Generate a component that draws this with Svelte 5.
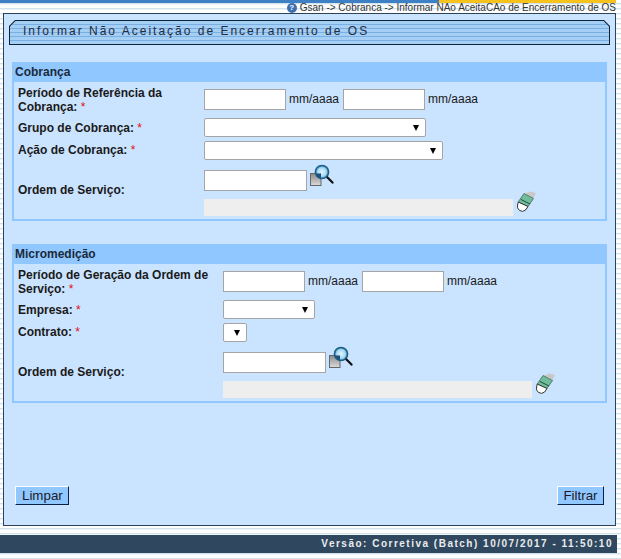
<script>
  const months = 'mm/aaaa';
</script>

{#snippet lupa()}
  <svg class="lupa" width="24" height="22" viewBox="0 0 24 22" aria-hidden="true">
    <defs>
      <linearGradient id="doc" x1="0" y1="0" x2="0" y2="1"><stop offset="0" stop-color="#8a8a8a"/><stop offset="1" stop-color="#dadada"/></linearGradient>
      <radialGradient id="lens"><stop offset="0" stop-color="#e4f5ff"/><stop offset="0.65" stop-color="#a9d9f2"/><stop offset="1" stop-color="#2e86b4"/></radialGradient>
    </defs>
    <rect x="0.5" y="9.5" width="10.5" height="12" fill="url(#doc)" stroke="#666"/>
    <circle cx="12" cy="8" r="6.6" fill="url(#lens)" stroke="#1f5f85" stroke-width="1.5"/>
    <path d="M5.8 9.5 L11 9.5 L11 14.4 Q7.4 13.6 5.8 9.5 Z" fill="#1d4f78"/>
    <path d="M17.5 13.5 L22.5 18.6" stroke="#111" stroke-width="2.2" stroke-linecap="round"/>
  </svg>
{/snippet}

{#snippet borracha()}
  <svg class="borracha" width="20" height="22" viewBox="0 0 20 22" aria-hidden="true">
    <path d="M7 3 L13 0.5 L19 2 L16 8 Z" fill="#c8c8c8"/>
    <path d="M7 2.5 L16.5 7.5 L11 15.5 L1.2 11 Z" fill="#6fbd9a" stroke="#4a6a5c" stroke-width="0.8"/>
    <path d="M3.8 8.4 L13 13" stroke="#1f4f3a" stroke-width="1"/>
    <path d="M1.2 11 L11 15.5 L8.6 19 Q5.6 21.6 2.4 19.4 Q-0.4 17 0.6 14 Z" fill="#fff" stroke="#333"/>
  </svg>
{/snippet}

<div class="page">
  <div class="topbar"><div class="blue"></div><div class="orange"></div></div>
  <div class="crumb">
    <span class="help">?</span>
    <span>Gsan -&gt; Cobranca -&gt; Informar NAo AceitaCAo de Encerramento de OS</span>
  </div>

  <main class="panel">
    <div class="title-border"><h1 class="title">Informar Não Aceitação de Encerramento de OS</h1></div>

    <section class="box first">
      <h2>Cobrança</h2>
      <div class="row two">
        <div class="lbl wide">Período de Referência da Cobrança: <em>*</em></div>
        <input class="date" type="text" /><span class="unit">{months}</span>
        <input class="date" type="text" /><span class="unit">{months}</span>
      </div>
      <div class="row r1">
        <div class="lbl wide">Grupo de Cobrança: <em>*</em></div>
        <div class="sel w222"><select></select></div>
      </div>
      <div class="row r2">
        <div class="lbl wide">Ação de Cobrança: <em>*</em></div>
        <div class="sel w239"><select></select></div>
      </div>
      <div class="row os">
        <div class="lbl wide">Ordem de Serviço:</div>
        <div class="osfields">
          <div class="line"><input class="code" type="text" />{@render lupa()}</div>
          <div class="line desc"><input class="dis" type="text" disabled />{@render borracha()}</div>
        </div>
      </div>
    </section>

    <section class="box second">
      <h2>Micromedição</h2>
      <div class="row two">
        <div class="lbl narrow">Período de Geração da Ordem de Serviço: <em>*</em></div>
        <input class="date" type="text" /><span class="unit">{months}</span>
        <input class="date" type="text" /><span class="unit">{months}</span>
      </div>
      <div class="row r1">
        <div class="lbl narrow">Empresa: <em>*</em></div>
        <div class="sel w92"><select></select></div>
      </div>
      <div class="row r2">
        <div class="lbl narrow">Contrato: <em>*</em></div>
        <div class="sel w24"><select></select></div>
      </div>
      <div class="row os">
        <div class="lbl narrow">Ordem de Serviço:</div>
        <div class="osfields">
          <div class="line"><input class="code" type="text" />{@render lupa()}</div>
          <div class="line desc"><input class="dis" type="text" disabled />{@render borracha()}</div>
        </div>
      </div>
    </section>

    <div class="actions">
      <button type="button" class="limpar">Limpar</button>
      <button type="button" class="filtrar">Filtrar</button>
    </div>
  </main>

  <footer class="foot">Versão: Corretiva (Batch) 10/07/2017 - 11:50:10</footer>
</div>

<style>
  :global(body) {
    margin: 0;
    background: #fff;
  }
  .page {
    width: 621px;
    height: 559px;
    overflow: hidden;
    display: flex;
    flex-direction: column;
    font-family: "Liberation Sans", Arial, sans-serif;
    color: #1a1a1a;
    background: repeating-linear-gradient(180deg, #ffffff 0 3px, #d3e3ec 3px 4px, #eef5f9 4px 5px);
  }
  .topbar {
    display: flex;
    height: 3px;
    flex: none;
  }
  .blue { width: 439px; background: #3f7fc4; }
  .orange { width: 177px; background: #f8c21c; }
  .crumb {
    height: 10px;
    flex: none;
    display: flex;
    justify-content: flex-end;
    align-items: center;
    gap: 3px;
    padding-right: 5px;
    font-size: 10px;
    line-height: 10px;
    color: #333;
    white-space: nowrap;
  }
  .help {
    width: 10px;
    height: 10px;
    border-radius: 50%;
    background: #3d6fb0;
    color: #fff;
    font-size: 8px;
    font-weight: bold;
    text-align: center;
  }
  .panel {
    flex: none;
    box-sizing: border-box;
    margin-left: 3px;
    width: 613px;
    height: 513px;
    border: 1px solid #2c4258;
    background: #cae3ff;
    padding: 6px 5px 0 5px;
    display: flex;
    flex-direction: column;
  }
  .title-border {
    width: 601px;
    height: 25px;
    flex: none;
    padding: 1px;
    box-sizing: border-box;
    background: #0e2238;
    clip-path: polygon(6px 0, calc(100% - 6px) 0, 100% 6px, 100% 100%, 0 100%, 0 6px);
  }
  .title {
    margin: 0;
    height: 23px;
    box-sizing: border-box;
    padding: 3px 0 0 13px;
    font-size: 12px;
    line-height: 15px;
    font-weight: normal;
    letter-spacing: 2px;
    white-space: nowrap;
    color: #1f2c3d;
    clip-path: polygon(5.5px 0, calc(100% - 5.5px) 0, 100% 5.5px, 100% 100%, 0 100%, 0 5.5px);
    background: repeating-linear-gradient(180deg, #a6cff5 0 3px, #7aafe4 3px 4px);
  }
  .box {
    flex: none;
    box-sizing: border-box;
    width: 595px;
    height: 159px;
    margin-left: 3px;
    border: 2px solid #90c7ff;
    border-top: 0;
    display: flex;
    flex-direction: column;
  }
  .first { margin-top: 17px; }
  .second { margin-top: 23px; }
  h2 {
    margin: 0 -2px;
    flex: none;
    height: 20px;
    padding-left: 3px;
    background: #90c7ff;
    font-size: 12px;
    line-height: 20px;
    font-weight: bold;
    color: #1a2a3a;
  }
  .row {
    display: flex;
    align-items: center;
    flex: none;
    padding-left: 4px;
  }
  .two { height: 34px; }
  .two .lbl { margin-top: 2px; }
  .r1 { height: 23px; }
  .r2 { height: 23px; }
  .r2 .lbl { margin-bottom: 2px; }
  .os {
    height: 50px;
    margin-top: 8px;
    align-items: flex-start;
  }
  .os .lbl { margin-top: 13px; }
  .lbl {
    font-size: 12px;
    line-height: 14px;
    font-weight: bold;
    flex: none;
    box-sizing: border-box;
    padding-right: 4px;
  }
  .wide { width: 186px; }
  .narrow { width: 205px; }
  em {
    color: #e01010;
    font-style: normal;
    font-weight: normal;
  }
  input {
    box-sizing: border-box;
    margin: 0;
    padding: 1px 2px;
    height: 21px;
    border: 1px solid #a5a5a5;
    background: #fff;
    font: 12px "Liberation Sans", Arial, sans-serif;
  }
  .date { width: 82px; }
  .unit {
    font-size: 12px;
    width: 57px;
    padding-left: 3px;
    box-sizing: border-box;
    flex: none;
  }
  .code { width: 103px; }
  .dis {
    width: 309px;
    height: 17px;
    border: 0;
    background: #eeeeee;
  }
  .sel {
    position: relative;
    height: 19px;
  }
  .sel::after {
    content: "";
    position: absolute;
    right: 7px;
    top: 7px;
    border-left: 3.5px solid transparent;
    border-right: 3.5px solid transparent;
    border-top: 6px solid #000;
    pointer-events: none;
  }
  select {
    appearance: none;
    width: 100%;
    height: 100%;
    display: block;
    margin: 0;
    box-sizing: border-box;
    border: 1px solid #a5a5a5;
    border-radius: 2px;
    background: #fff;
  }
  .w222 { width: 222px; }
  .w239 { width: 239px; }
  .w92 { width: 92px; }
  .w24 { width: 24px; }
  .osfields {
    display: flex;
    flex-direction: column;
  }
  .line {
    display: flex;
    align-items: flex-start;
    height: 29px;
  }
  .desc { height: 21px; }
  .lupa { margin: -6px 0 0 3px; flex: none; }
  .borracha { margin: -8px 0 0 4px; flex: none; }
  .actions {
    display: flex;
    justify-content: space-between;
    margin: 83px 0 0 6px;
    width: 589px;
  }
  button {
    box-sizing: border-box;
    height: 19px;
    font: 13.33px/15px "Liberation Sans", Arial, sans-serif;
    color: #1a1a2a;
    background: #90c7ff;
    border: 1px solid;
    border-color: #fff #0d1f4d #0d1f4d #fff;
  }
  .limpar { padding: 0 6px; width: 54px; }
  .filtrar { padding: 0 4px; width: 47px; }
  .foot {
    flex: none;
    box-sizing: border-box;
    margin-top: 9px;
    width: 617px;
    height: 18px;
    padding-right: 4px;
    background: #2f4860;
    color: #ececec;
    font-size: 10px;
    line-height: 18px;
    font-weight: bold;
    letter-spacing: 1.5px;
    text-align: right;
    white-space: nowrap;
  }
</style>
